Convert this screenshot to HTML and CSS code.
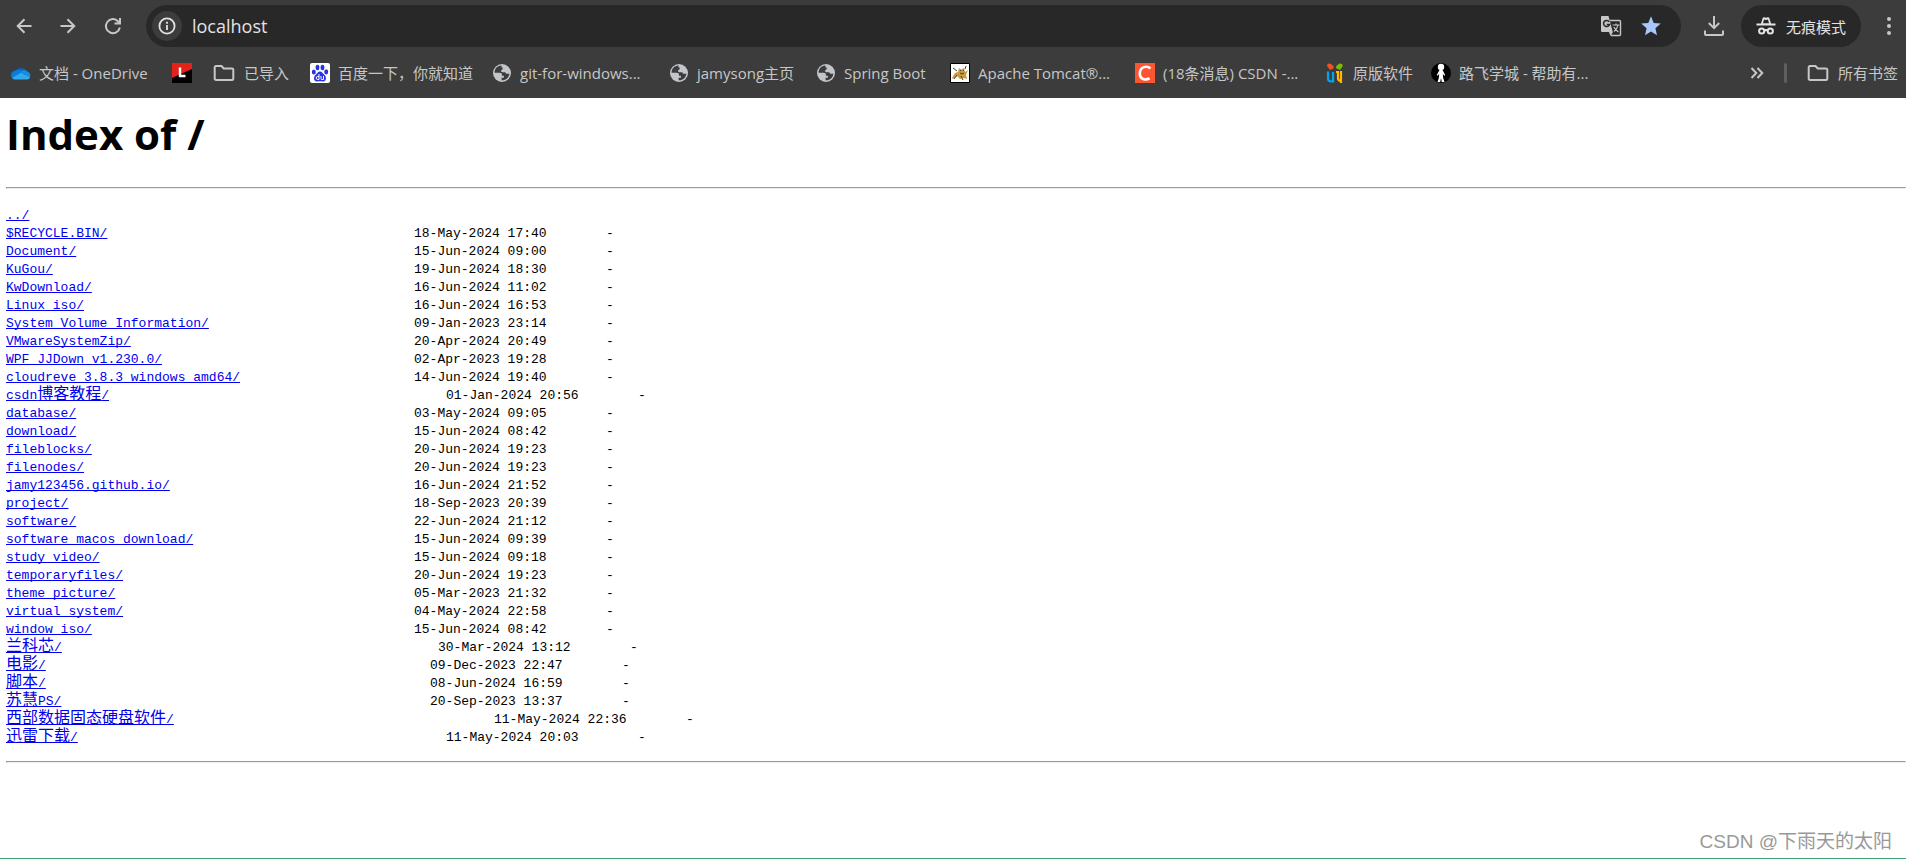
FILE: index.html
```html
<!DOCTYPE html>
<html lang="zh-CN">
<head>
<meta charset="utf-8">
<title>Index of /</title>
<link rel="stylesheet" href="styles.css">
</head>
<body>
<svg class="defs" aria-hidden="true">
  <symbol id="globe" viewBox="0 0 20 20"><circle cx="10" cy="10" r="9" fill="#c2c5ca"/><path d="M9.500 2.600C5.200 2.800 2.600 6 2.600 9.700h5.300c1.300 0 2 .7 2 1.800v1.200h2v2.100H9.600v2.500c4 .3 7.400-2.500 7.800-6.500h-2.100c-1.200 0-1.700-.5-1.900-1.600h-3c-1 0-1.300-.5-1.300-1.200 0-1 .5-1.600 1.600-1.600V4.600H9.500z" fill="#3c3c3c"/></symbol>
  <symbol id="folder" viewBox="0 0 22 18"><path d="M3 2h5.500l2.200 2.500H19a1.300 1.300 0 0 1 1.300 1.300v8.900A1.300 1.300 0 0 1 19 16H3a1.300 1.300 0 0 1-1.300-1.300V3.300A1.300 1.300 0 0 1 3 2z" fill="none" stroke="#c7c7c7" stroke-width="2"/></symbol>
</svg>
<header class="browser">
  <div class="toolbar">
    <nav class="history">
      <button class="icon-button" aria-label="后退"><svg width="16" height="16" viewBox="0 0 16 16"><path d="M15.500 8H2M8.500 1.200L1.700 8l6.800 6.800" class="line"/></svg></button>
      <button class="icon-button" aria-label="前进"><svg width="16" height="16" viewBox="0 0 16 16"><path d="M.5 8H14M7.500 1.200L14.300 8l-6.800 6.800" class="line"/></svg></button>
      <button class="icon-button" aria-label="重新加载"><svg width="18" height="18" viewBox="0 0 18 18"><path d="M15.800 10.500A7 7 0 1 1 14.200 4.500L16 6.300M16 1v5.500h-5.500" class="line"/></svg></button>
    </nav>
    <div class="omnibox">
      <button class="site-info" aria-label="查看网站信息"><svg width="18" height="18" viewBox="0 0 18 18"><circle cx="9" cy="9" r="7.600" fill="none" stroke="#e3e3e3" stroke-width="1.800"/><path d="M9 8v5M9 4.700v2" stroke="#e3e3e3" stroke-width="1.800"/></svg></button>
      <input class="address" type="text" value="localhost" aria-label="地址">
      <button class="icon-button" aria-label="翻译"><svg width="22" height="22" viewBox="0 0 22 22"><path d="M10 5.500h9.500a1 1 0 0 1 1 1v13a1 1 0 0 1-1 1H11" fill="none" stroke="#c7c7c7" stroke-width="1.400"/><path d="M2 1h6.500l4.300 16H2a1 1 0 0 1-1-1V2a1 1 0 0 1 1-1z" fill="#c7c7c7"/><path d="M9 17h4l-2.500 4z" fill="#c7c7c7"/><path d="M9.200 6.700A3.100 3.100 0 1 0 9.600 9.500H6.700" fill="none" stroke="#282828" stroke-width="1.500"/><path d="M12.500 10h7M16 8.500V10M18 10c-.5 3-2.200 5-4 6.500M13.800 12c1 2 2.500 3.500 4.700 5" fill="none" stroke="#c7c7c7" stroke-width="1.200"/></svg></button>
      <button class="icon-button" aria-label="编辑书签"><svg width="20" height="20" viewBox="0 0 20 20"><path d="M10 .3l2.700 6.600 7.100.6-5.400 4.700 1.600 7L10 15.500l-6 3.700 1.600-7L.2 7.500l7.100-.6z" fill="#a8c7fa"/></svg></button>
    </div>
    <button class="icon-button" aria-label="下载"><svg width="22" height="22" viewBox="0 0 22 22"><path d="M11 1v12M5.800 8l5.200 5.200L16.200 8M2 15.500V19a1 1 0 0 0 1 1h16a1 1 0 0 0 1-1v-3.500" class="line"/></svg></button>
    <button class="incognito"><svg width="20" height="20" viewBox="0 0 20 20"><path d="M5 7.500L6.700 2c.3-.8.800-1 1.500-.8l1.800.6 1.800-.6c.7-.2 1.200 0 1.500.8L15 7.500h4.500v2H.5v-2z" fill="#e3e3e3"/><path d="M7 7.300h6L12 3.400l-2 .6-2-.6z" fill="#282828"/><circle cx="5.700" cy="15" r="2.600" class="lens"/><circle cx="14.300" cy="15" r="2.600" class="lens"/><path d="M8.200 14.700q1.800-1.200 3.600 0" class="lens"/></svg>无痕模式</button>
    <button class="icon-button" aria-label="菜单"><svg width="6" height="20" viewBox="0 0 6 20"><g fill="#c7c7c7"><circle cx="3" cy="3" r="2"/><circle cx="3" cy="10" r="2"/><circle cx="3" cy="17" r="2"/></g></svg></button>
  </div>
  <nav class="bookmarks">
    <a class="bookmark" href="#"><svg width="20" height="20" viewBox="0 0 20 20"><path d="M5 7.500a6 5 0 0 1 10.500.3L9 13z" fill="#0f5fb8"/><path d="M5.200 7.200A5 5 0 0 0 1 15l7-2 5.500-3.600C11.500 7 8.500 5.500 5.200 7.200z" fill="#0a7bd8"/><path d="M9.500 9.300c2-3 6-2.500 6.900-.7A4 4 0 0 1 19 14z" fill="#168ee0"/><path d="M1 15l9-5.300 9 4.300a3 3 0 0 1-2.500 2.500H4.500A4 4 0 0 1 1 15z" fill="#2eaaf0"/></svg>文档 - OneDrive</a>
    <a class="bookmark" href="#" aria-label="L"><svg width="20" height="20" viewBox="0 0 20 20"><path d="M0 0h20v20H0z" fill="#000"/><path d="M0 0h20v6L0 15z" fill="#e2231a"/><path d="M8 4.500V13h5.500" fill="none" stroke="#fff" stroke-width="2.400"/></svg></a>
    <a class="bookmark folder" href="#"><svg width="22" height="18"><use href="#folder"/></svg>已导入</a>
    <a class="bookmark" href="#"><svg width="20" height="20" viewBox="0 0 20 20"><rect width="20" height="20" rx="2" fill="#fff"/><g fill="#2932e1"><ellipse cx="3.800" cy="9" rx="2" ry="2.600"/><ellipse cx="7.500" cy="4.500" rx="1.900" ry="2.800"/><ellipse cx="12.500" cy="4.500" rx="1.900" ry="2.800"/><ellipse cx="16.200" cy="8.800" rx="2" ry="2.600"/><path d="M10 8.500c2 0 2.800 2 4.300 3.300 2.300 2 2.400 6.400-1 6.700-1.300.1-2-.2-3.300-.2s-2 .3-3.300.2c-3.400-.3-3.300-4.700-1-6.700C7.200 10.500 8 8.500 10 8.500z"/></g><path d="M9 11v5.500H7.700a1.500 1.500 0 0 1 0-3H9M11 13v2.800q0 .7.8.7h1.700V13" fill="none" stroke="#fff"/></svg>百度一下，你就知道</a>
    <a class="bookmark" href="#"><svg width="20" height="20"><use href="#globe"/></svg>git-for-windows...</a>
    <a class="bookmark" href="#"><svg width="20" height="20"><use href="#globe"/></svg>jamysong主页</a>
    <a class="bookmark" href="#"><svg width="20" height="20"><use href="#globe"/></svg>Spring Boot</a>
    <a class="bookmark" href="#"><svg width="20" height="20" viewBox="0 0 20 20"><path d="M.5.5h19v19H.5z" fill="#fff" stroke="#000"/><path d="M2 15l3-5 3-1 1-4 2 1.500L14 5l1 4 3-2-2 5 1 4-4-1-3 1-3-3-4 3z" fill="#c99b45"/><path d="M3 5l4 3M10 7.500h1M13 7.500h1M10 10l2 1 2-1M4 16l3-4M13 17l-2-4M16 3l-1 3" stroke="#4b3e2b" fill="none"/></svg>Apache Tomcat®...</a>
    <a class="bookmark" href="#"><svg width="20" height="20" viewBox="0 0 20 20"><path d="M0 0h20v20H0z" fill="#fc5531"/><path d="M15.500 5.500C12 2.200 5 3.500 4.800 10.300c0 6.200 5.700 7.500 9.800 4.800" fill="none" stroke="#fff" stroke-width="2.600"/></svg>(18条消息) CSDN -...</a>
    <a class="bookmark" href="#"><svg width="20" height="20" viewBox="0 0 20 20"><path d="M2 3a2.600 2.600 0 0 1 5-1 2.500 2.500 0 0 1 1.300 3.500L5 7z" fill="#f25022"/><path d="M17.800 3a2.600 2.600 0 0 0-5-1 2.500 2.500 0 0 0-1.300 3.500L15 7z" fill="#7fba00"/><path d="M3 8.500v6.800c0 2.300 1.200 3.200 3.200 3.200h3M8 9v10" fill="none" stroke="#00a4ef" stroke-width="2.200"/><path d="M11 9h2v6c0 2 .5 3 3 3M16 8v12" fill="none" stroke="#ffb900" stroke-width="2.200"/></svg>原版软件</a>
    <a class="bookmark" href="#"><svg width="20" height="20" viewBox="0 0 20 20"><circle cx="10" cy="10" r="10" fill="#000"/><circle cx="10" cy="4" r="3.200" fill="#fff"/><path d="M8.500 7h3l2.700 5-1 .8-1.400-2 .4 4.200 1.300 4h-2.700L10 15l-.8 4H6.500l1.300-4 .4-4.200-1.400 2-1-.8z" fill="#fff"/></svg>路飞学城 - 帮助有...</a>
    <button class="icon-button" aria-label="更多书签"><svg width="14" height="12" viewBox="0 0 14 12"><path d="M1.500 1l4.800 5-4.800 5M7.500 1l4.800 5-4.800 5" class="line"/></svg></button>
    <span class="divider"></span>
    <a class="bookmark folder" href="#"><svg width="22" height="18"><use href="#folder"/></svg>所有书签</a>
  </nav>
</header>
<main class="page">
  <h1 class="title">Index of /</h1>
  <hr class="rule">
  <div class="listing">
    <div class="row"><span class="name"><a href="#">../</a></span></div>
    <div class="row"><span class="name"><a href="#">$RECYCLE.BIN/</a></span><span class="date">18-May-2024 17:40</span><span>-</span></div>
    <div class="row"><span class="name"><a href="#">Document/</a></span><span class="date">15-Jun-2024 09:00</span><span>-</span></div>
    <div class="row"><span class="name"><a href="#">KuGou/</a></span><span class="date">19-Jun-2024 18:30</span><span>-</span></div>
    <div class="row"><span class="name"><a href="#">KwDownload/</a></span><span class="date">16-Jun-2024 11:02</span><span>-</span></div>
    <div class="row"><span class="name"><a href="#">Linux_iso/</a></span><span class="date">16-Jun-2024 16:53</span><span>-</span></div>
    <div class="row"><span class="name"><a href="#">System Volume Information/</a></span><span class="date">09-Jan-2023 23:14</span><span>-</span></div>
    <div class="row"><span class="name"><a href="#">VMwareSystemZip/</a></span><span class="date">20-Apr-2024 20:49</span><span>-</span></div>
    <div class="row"><span class="name"><a href="#">WPF_JJDown_v1.230.0/</a></span><span class="date">02-Apr-2023 19:28</span><span>-</span></div>
    <div class="row"><span class="name"><a href="#">cloudreve_3.8.3_windows_amd64/</a></span><span class="date">14-Jun-2024 19:40</span><span>-</span></div>
    <div class="row" style="--wide:4"><span class="name"><a href="#">csdn<span class="han">博客教程</span>/</a></span><span class="date">01-Jan-2024 20:56</span><span>-</span></div>
    <div class="row"><span class="name"><a href="#">database/</a></span><span class="date">03-May-2024 09:05</span><span>-</span></div>
    <div class="row"><span class="name"><a href="#">download/</a></span><span class="date">15-Jun-2024 08:42</span><span>-</span></div>
    <div class="row"><span class="name"><a href="#">fileblocks/</a></span><span class="date">20-Jun-2024 19:23</span><span>-</span></div>
    <div class="row"><span class="name"><a href="#">filenodes/</a></span><span class="date">20-Jun-2024 19:23</span><span>-</span></div>
    <div class="row"><span class="name"><a href="#">jamy123456.github.io/</a></span><span class="date">16-Jun-2024 21:52</span><span>-</span></div>
    <div class="row"><span class="name"><a href="#">project/</a></span><span class="date">18-Sep-2023 20:39</span><span>-</span></div>
    <div class="row"><span class="name"><a href="#">software/</a></span><span class="date">22-Jun-2024 21:12</span><span>-</span></div>
    <div class="row"><span class="name"><a href="#">software_macos_download/</a></span><span class="date">15-Jun-2024 09:39</span><span>-</span></div>
    <div class="row"><span class="name"><a href="#">study_video/</a></span><span class="date">15-Jun-2024 09:18</span><span>-</span></div>
    <div class="row"><span class="name"><a href="#">temporaryfiles/</a></span><span class="date">20-Jun-2024 19:23</span><span>-</span></div>
    <div class="row"><span class="name"><a href="#">theme_picture/</a></span><span class="date">05-Mar-2023 21:32</span><span>-</span></div>
    <div class="row"><span class="name"><a href="#">virtual_system/</a></span><span class="date">04-May-2024 22:58</span><span>-</span></div>
    <div class="row"><span class="name"><a href="#">window_iso/</a></span><span class="date">15-Jun-2024 08:42</span><span>-</span></div>
    <div class="row" style="--wide:3"><span class="name"><a href="#"><span class="han">兰科芯</span>/</a></span><span class="date">30-Mar-2024 13:12</span><span>-</span></div>
    <div class="row" style="--wide:2"><span class="name"><a href="#"><span class="han">电影</span>/</a></span><span class="date">09-Dec-2023 22:47</span><span>-</span></div>
    <div class="row" style="--wide:2"><span class="name"><a href="#"><span class="han">脚本</span>/</a></span><span class="date">08-Jun-2024 16:59</span><span>-</span></div>
    <div class="row" style="--wide:2"><span class="name"><a href="#"><span class="han">苏慧</span>PS/</a></span><span class="date">20-Sep-2023 13:37</span><span>-</span></div>
    <div class="row" style="--wide:10"><span class="name"><a href="#"><span class="han">西部数据固态硬盘软件</span>/</a></span><span class="date">11-May-2024 22:36</span><span>-</span></div>
    <div class="row" style="--wide:4"><span class="name"><a href="#"><span class="han">迅雷下载</span>/</a></span><span class="date">11-May-2024 20:03</span><span>-</span></div>
  </div>
  <hr class="rule">
</main>
<footer class="credit">CSDN @下雨天的太阳</footer>
</body>
</html>
```

FILE: styles.css
```css
* { box-sizing: border-box; }
body {
  margin: 0;
  min-height: 100vh;
  display: flex;
  flex-direction: column;
  background: #fff;
  color: #000;
  font-family: "Open Sans", "Noto Sans CJK SC", sans-serif;
}
button, input {
  margin: 0;
  padding: 0;
  border: 0;
  background: none;
  color: inherit;
  font: inherit;
}
svg { display: block; flex: none; }
.defs { position: absolute; width: 0; height: 0; }
.line { fill: none; stroke: #c7c7c7; stroke-width: 2; }
.lens { fill: none; stroke: #e3e3e3; stroke-width: 2; }

.browser { background: #3c3c3c; color: #c7c7c7; }
.toolbar {
  display: flex;
  align-items: center;
  padding: 5px 14px 0 16px;
  height: 47px;
}
.icon-button { display: grid; place-items: center; }
.history { display: flex; align-items: center; gap: 28px; margin-right: 24px; }
.omnibox {
  flex: 1;
  display: flex;
  align-items: center;
  gap: 19px;
  height: 42px;
  margin-right: 22px;
  padding: 0 20px 0 6px;
  border-radius: 21px;
  background: #282828;
}
.site-info {
  display: grid;
  place-items: center;
  width: 30px;
  height: 30px;
  border-radius: 50%;
  background: #3c3c3c;
}
.address {
  flex: 1;
  min-width: 0;
  margin-left: -9px;
  color: #e3e3e3;
  font-size: 18px;
  outline: 0;
}
.incognito {
  display: flex;
  align-items: center;
  gap: 10px;
  height: 42px;
  margin: 0 25px 0 16px;
  padding: 0 15px;
  border-radius: 21px;
  background: #282828;
  color: #e3e3e3;
  font-size: 15px;
}
.bookmarks {
  display: grid;
  grid-template-columns: 161px 41px 97px 182px 177px 147px 134px 185px 190px 106px 1fr auto auto auto;
  align-items: center;
  height: 51px;
  padding: 0 8px 0 11px;
  font-size: 15px;
  white-space: nowrap;
}
.bookmark {
  display: flex;
  align-items: center;
  gap: 8px;
  color: inherit;
  text-decoration: none;
}
.folder { gap: 9px; }
.divider {
  width: 3px;
  height: 20px;
  margin: 0 20px;
  border-radius: 2px;
  background: #5e5e5e;
}

.page { flex: 1; padding: 8px 0 0 6px; }
.title {
  margin: 0 0 26px;
  font-size: 42px;
  line-height: 55px;
  font-weight: 700;
}
.rule { margin: 0; border: 1px inset #eee; }
.listing {
  padding: 18px 0 14px;
  font-family: "Liberation Mono", "Noto Sans CJK SC", monospace;
  font-size: 13px;
  line-height: 18px;
}
.row { --wide: 0; display: flex; height: 18px; white-space: pre; }
.name { width: calc(408px + var(--wide) * 8px); }
.name a { color: #00e; text-decoration: underline; text-decoration-skip-ink: none; }
.han { font-size: 16px; line-height: 16px; }
.date { width: 192px; }

.credit {
  padding: 0 14px 4px 0;
  border-bottom: 1px solid #3f9f72;
  margin-bottom: 3px;
  color: #999;
  text-align: right;
  font-family: "Liberation Sans", "Noto Sans CJK SC", sans-serif;
  font-size: 19px;
  line-height: 24px;
}
```
